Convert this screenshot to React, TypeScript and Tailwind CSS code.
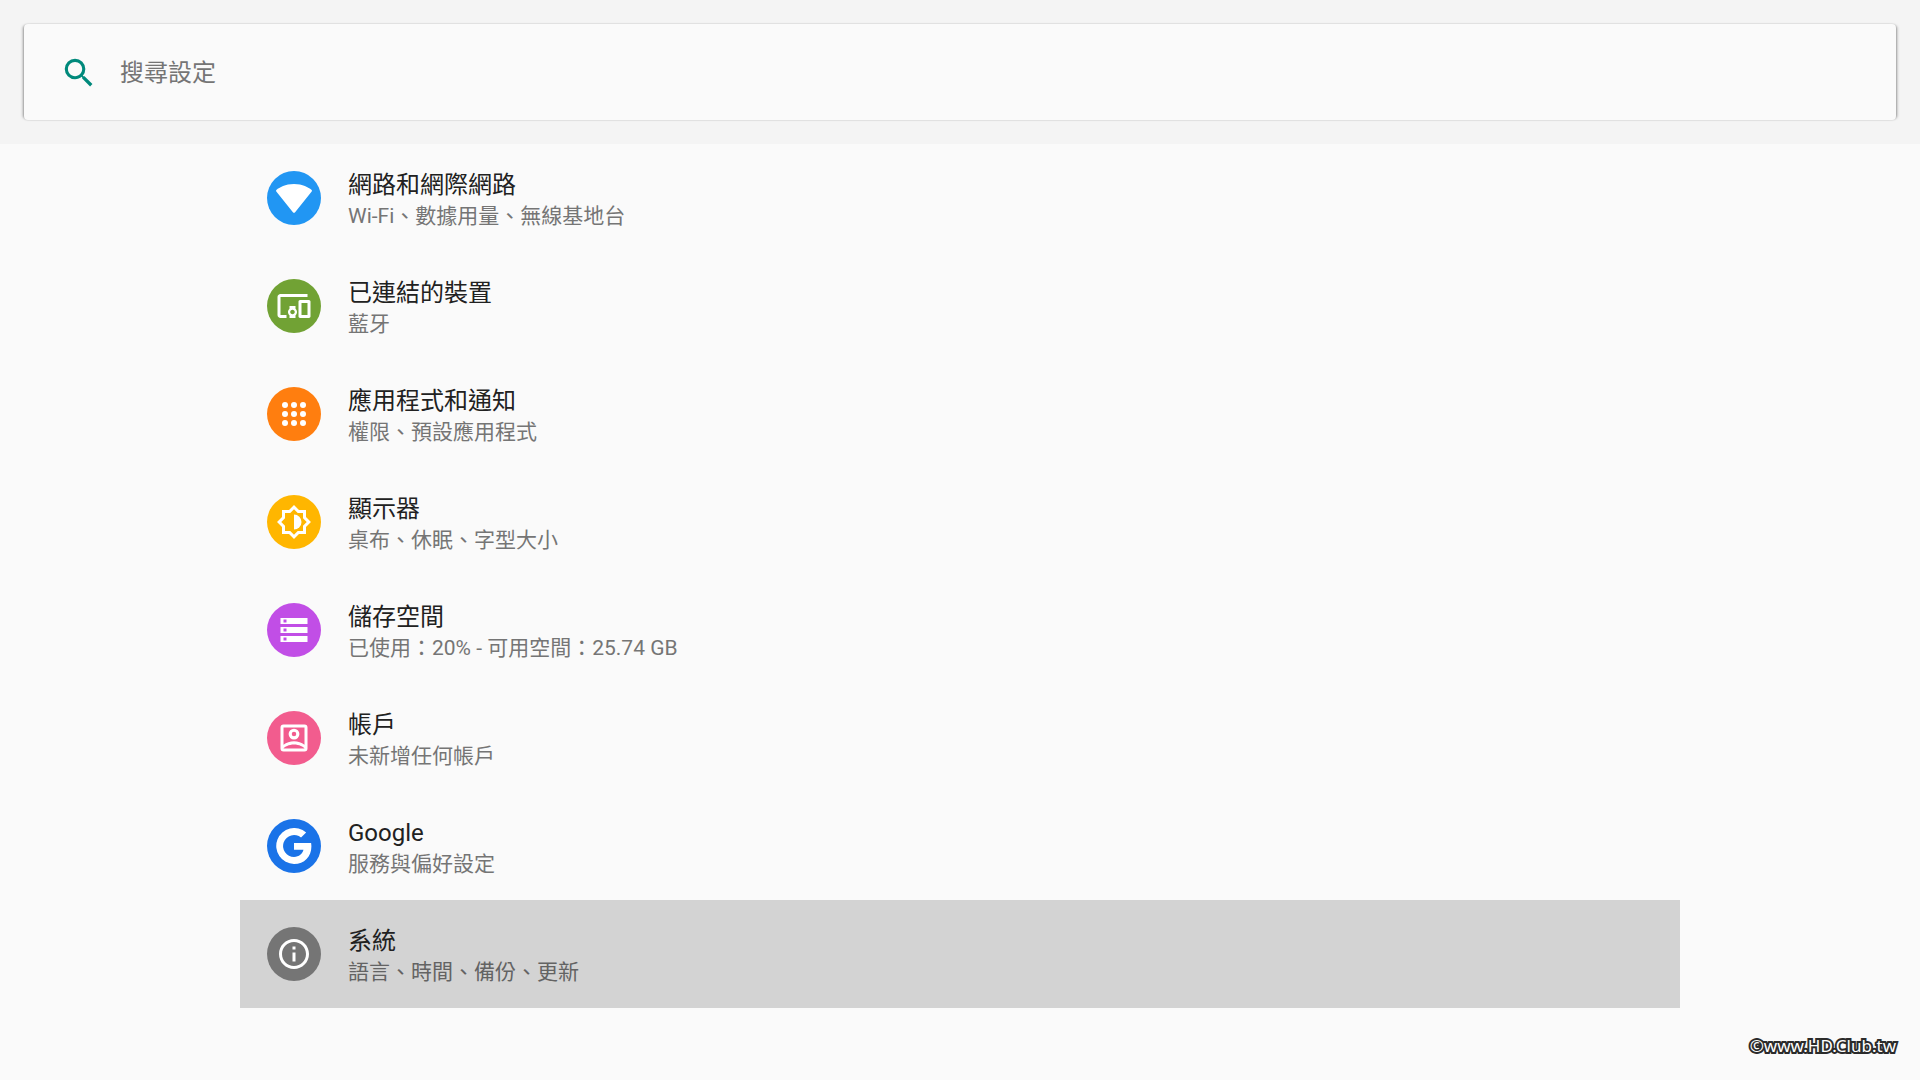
import type { ReactNode } from 'react'
import { MdDevicesOther, MdInfoOutline, MdSearch } from 'react-icons/md'

interface Category {
  title: string
  summary: string
  color: string
  icon: ReactNode
  focused?: boolean
}

function Glyph({ children }: { children: ReactNode }) {
  return (
    <svg viewBox="0 0 24 24" className="size-9" fill="currentColor" aria-hidden="true">
      {children}
    </svg>
  )
}

const CATEGORIES: Category[] = [
  {
    title: '網路和網際網路',
    summary: 'Wi-Fi、數據用量、無線基地台',
    color: 'bg-[#2196f3]',
    icon: (
      <Glyph>
        <path d="M12.6 21.6 23.8 7.6c.3-.4.2-.8-.2-1.1C21.7 5.1 17.8 2.7 12 2.7S2.3 5.1.4 6.5c-.4.3-.5.7-.2 1.1L11.4 21.6c.3.4.9.4 1.2 0z" />
      </Glyph>
    ),
  },
  {
    title: '已連結的裝置',
    summary: '藍牙',
    color: 'bg-[#71a234]',
    icon: <MdDevicesOther className="size-9" aria-hidden="true" />,
  },
  {
    title: '應用程式和通知',
    summary: '權限、預設應用程式',
    color: 'bg-[#ff7e0f]',
    icon: (
      <Glyph>
        {[6, 12, 18].map(y => [6, 12, 18].map(x => <circle key={`${x}-${y}`} cx={x} cy={y} r="2" />))}
      </Glyph>
    ),
  },
  {
    title: '顯示器',
    summary: '桌布、休眠、字型大小',
    color: 'bg-[#ffb600]',
    icon: (
      <Glyph>
        <path
          fillRule="evenodd"
          d="M20 15.31 23.31 12 20 8.69V4h-4.69L12 .69 8.69 4H4v4.69L.69 12 4 15.31V20h4.69L12 23.31 15.31 20H20zM18 14.48V18h-3.52L12 20.48 9.52 18H6v-3.52L3.52 12 6 9.52V6h3.52L12 3.52 14.48 6H18v3.52L20.48 12z"
        />
        <path d="M12 7v10a5 5 0 0 0 0-10z" />
      </Glyph>
    ),
  },
  {
    title: '儲存空間',
    summary: '已使用：20% - 可用空間：25.74 GB',
    color: 'bg-[#c14ee6]',
    icon: (
      <Glyph>
        <path
          fillRule="evenodd"
          d="M3 20h18v-4H3zM5 17h2v2H5zM3 4v4h18V4zM7 7H5V5h2zM3 14h18v-4H3zM5 11h2v2H5z"
        />
      </Glyph>
    ),
  },
  {
    title: '帳戶',
    summary: '未新增任何帳戶',
    color: 'bg-[#f25c8e]',
    icon: (
      <Glyph>
        <path
          fillRule="evenodd"
          d="M19 3H5a2 2 0 0 0-2 2v14a2 2 0 0 0 2 2h14a2 2 0 0 0 2-2V5a2 2 0 0 0-2-2zM5 19c.6-1 3.6-2.6 7-2.6s6.4 1.6 7 2.6zM19 16.5C17.1 15 14.6 14.2 12 14.2S6.9 15 5 16.5V5h14z"
        />
        <path
          fillRule="evenodd"
          d="M12 13a3.6 3.6 0 1 0 0-7.2 3.6 3.6 0 0 0 0 7.2zM12 10.9a1.5 1.5 0 1 1 0-3 1.5 1.5 0 0 1 0 3z"
        />
      </Glyph>
    ),
  },
  {
    title: 'Google',
    summary: '服務與偏好設定',
    color: 'bg-[#1a73e8]',
    icon: (
      <Glyph>
        <path d="M12 10v4.5h6.3c-.6 2.6-2.9 4.8-6.3 4.8a7.3 7.3 0 1 1 4.7-12.9l3.4-3.4A12 12 0 1 0 12 24c6.9 0 11.6-4.9 11.6-11.7 0-.8-.1-1.6-.2-2.3z" />
      </Glyph>
    ),
  },
  {
    title: '系統',
    summary: '語言、時間、備份、更新',
    color: 'bg-[#757575]',
    icon: <MdInfoOutline className="size-9" aria-hidden="true" />,
    focused: true,
  },
]

function CategoryRow({ title, summary, color, icon, focused }: Category) {
  return (
    <li>
      <a href="#" className={`flex h-27 items-center gap-[27px] px-[27px] ${focused ? 'bg-[#d3d3d3]' : ''}`}>
        <span className={`flex size-[54px] shrink-0 items-center justify-center rounded-full text-white ${color}`}>
          {icon}
        </span>
        <span className="flex min-w-0 flex-col pt-[5px]">
          <span className="text-[24px] leading-[31px] text-[#212121]">{title}</span>
          <span className={`text-[21px] leading-[31px] ${focused ? 'text-[#636363]' : 'text-[#757575]'}`}>
            {summary}
          </span>
        </span>
      </a>
    </li>
  )
}

export default function App() {
  return (
    <div className="relative min-h-screen bg-[#fafafa] font-[Roboto,'Noto_Sans_CJK_TC',sans-serif]">
      <header className="bg-[#f4f4f4] p-6">
        <label className="flex h-24 items-center gap-[22px] rounded-sm bg-[#fafafa] px-9 pt-0.5 shadow-[0_0_2px_rgba(0,0,0,0.2),3px_0_3px_-2px_rgba(0,0,0,0.35),-3px_0_3px_-2px_rgba(0,0,0,0.35)]">
          <MdSearch className="size-[38px] shrink-0 text-[#00897b]" aria-hidden="true" />
          <input
            type="text"
            aria-label="搜尋設定"
            placeholder="搜尋設定"
            className="min-w-0 flex-1 bg-transparent text-[24px] leading-8 text-[#212121] outline-none placeholder:text-[#757575]"
          />
        </label>
      </header>

      <main className="mx-auto w-3/4">
        <ul>
          {CATEGORIES.map(category => (
            <CategoryRow key={category.title} {...category} />
          ))}
        </ul>
      </main>

      <p className="absolute right-6 bottom-[22px] font-['Noto_Sans',sans-serif] text-[17px] leading-6 text-white [-webkit-text-stroke:4px_#2b2b2b] [paint-order:stroke_fill]">
        ©www.HD.Club.tw
      </p>
    </div>
  )
}
